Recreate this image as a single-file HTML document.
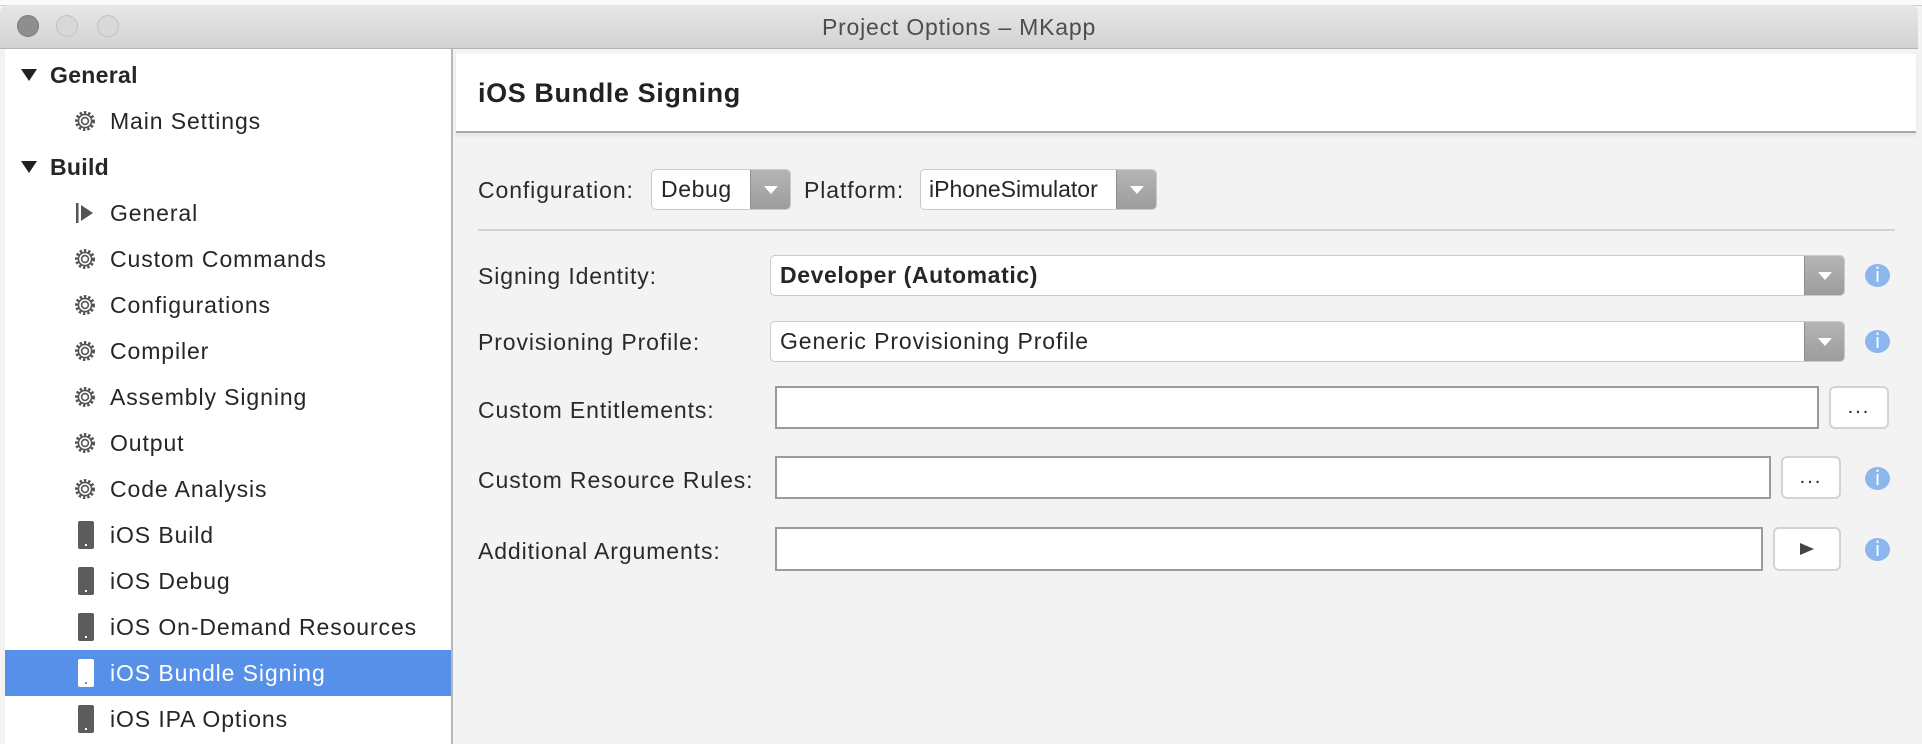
<!DOCTYPE html>
<html><head><meta charset="utf-8"><style>
*{box-sizing:border-box;margin:0;padding:0}
body{width:1922px;height:744px;overflow:hidden;background:#f3f3f3;font-family:"Liberation Sans",sans-serif;color:#262626;position:relative}
.abs{position:absolute}
#top{left:0;top:0;width:1922px;height:6px;background:#fafafa;border-bottom:1px solid #ccc}
#title{left:0;top:5px;width:1918px;height:44px;background:linear-gradient(#e8e7e8,#d3d2d3);border-bottom:1px solid #b5b5b5;border-radius:8px 8px 0 0;text-align:center;line-height:44px;font-size:23px;letter-spacing:0.8px;color:#4d4d4d}
.tl{width:22px;height:22px;border-radius:50%;top:15px;background:#d8d8d8;border:1px solid #c2c2c2}
#side{left:5px;top:49px;width:448px;height:695px;background:#fff;border-right:2px solid #b8b8b8}
.it{position:absolute;left:0;width:446px;height:46px;line-height:46px;font-size:23px;letter-spacing:0.9px}
.it .tx{position:absolute;left:105px}
.it.h .tx{left:45px;font-weight:bold;letter-spacing:0.3px}
.tri{position:absolute;left:16px;top:17px;width:0;height:0;border-left:8px solid transparent;border-right:8px solid transparent;border-top:12px solid #222}
.ic{position:absolute;left:68px;top:11px}
.ph{position:absolute;left:73px;top:9px;width:16px;height:28px;background:#5c5c5c;border-radius:2px}
.ph:after{content:"";position:absolute;left:7px;bottom:3px;width:2px;height:2px;background:#fff}
.sel{background:#5790e8;color:#fff}
.sel .ph{background:#fff}.sel .ph:after{background:#5790e8}
#hdr{left:456px;top:54px;width:1460px;height:79px;background:#fff;border-bottom:2px solid #a9a9a9;box-shadow:0 3px 4px rgba(0,0,0,.06)}
#hdr span{position:absolute;left:22px;top:24px;font-size:27px;font-weight:bold;color:#222;letter-spacing:0.6px}
.lbl{font-size:23px;color:#2a2a2a;letter-spacing:0.9px}
.combo{position:absolute;background:#fff;border:1px solid #c9c9c9;border-radius:5px;font-size:23px;letter-spacing:0.6px;padding-left:9px;overflow:hidden;white-space:nowrap}
.combo .dd{position:absolute;right:0;top:0;bottom:0;width:40px;background:linear-gradient(#b5b5b5,#9c9c9c);border-left:1px solid #8f8f8f}
.combo .dd:after{content:"";position:absolute;left:13px;top:50%;margin-top:-4px;border-left:7px solid transparent;border-right:7px solid transparent;border-top:8px solid #fff}
.inp{position:absolute;background:#fff;border:2px solid #9b9b9b}
.btn{position:absolute;background:#fff;border:2px solid #d3d3d3;border-radius:6px;text-align:center;font-size:20px;line-height:36px;letter-spacing:2px}
.info{position:absolute;left:1865px;width:25px;height:23px;border-radius:50%;background:#8cb6ec;color:#fff;text-align:center;font-size:20px;line-height:23px;font-family:"DejaVu Sans",sans-serif}
</style></head><body>
<div id="top" class="abs"></div>
<div id="title" class="abs">Project Options – MKapp</div>
<div class="abs tl" style="left:17px;background:#8e8e8e;border-color:#7b7b7b"></div>
<div class="abs tl" style="left:56px"></div>
<div class="abs tl" style="left:97px"></div>
<svg width="0" height="0" style="position:absolute"><defs><g id="gear"><circle cx="12" cy="12" r="8.5" fill="none" stroke="#555" stroke-width="3" stroke-dasharray="2.4 1.9"/><circle cx="12" cy="12" r="6.6" fill="none" stroke="#555" stroke-width="1.6"/><circle cx="12" cy="12" r="3.4" fill="none" stroke="#555" stroke-width="1.6"/></g></defs></svg>
<div id="side" class="abs">
<div class="it h" style="top:3px"><div class="tri"></div><span class="tx">General</span></div>
<div class="it" style="top:49px"><svg class="ic" width="24" height="24" viewBox="0 0 24 24"><use href="#gear"/></svg><span class="tx">Main Settings</span></div>
<div class="it h" style="top:95px"><div class="tri"></div><span class="tx">Build</span></div>
<div class="it" style="top:141px"><svg class="ic" width="24" height="24" viewBox="0 0 24 24"><rect x="3" y="2" width="2.5" height="20" fill="#555"/><path d="M8 4 L20 12 L8 20Z" fill="#555"/></svg><span class="tx">General</span></div>
<div class="it" style="top:187px"><svg class="ic" width="24" height="24" viewBox="0 0 24 24"><use href="#gear"/></svg><span class="tx">Custom Commands</span></div>
<div class="it" style="top:233px"><svg class="ic" width="24" height="24" viewBox="0 0 24 24"><use href="#gear"/></svg><span class="tx">Configurations</span></div>
<div class="it" style="top:279px"><svg class="ic" width="24" height="24" viewBox="0 0 24 24"><use href="#gear"/></svg><span class="tx">Compiler</span></div>
<div class="it" style="top:325px"><svg class="ic" width="24" height="24" viewBox="0 0 24 24"><use href="#gear"/></svg><span class="tx">Assembly Signing</span></div>
<div class="it" style="top:371px"><svg class="ic" width="24" height="24" viewBox="0 0 24 24"><use href="#gear"/></svg><span class="tx">Output</span></div>
<div class="it" style="top:417px"><svg class="ic" width="24" height="24" viewBox="0 0 24 24"><use href="#gear"/></svg><span class="tx">Code Analysis</span></div>
<div class="it" style="top:463px"><div class="ph"></div><span class="tx">iOS Build</span></div>
<div class="it" style="top:509px"><div class="ph"></div><span class="tx">iOS Debug</span></div>
<div class="it" style="top:555px"><div class="ph"></div><span class="tx">iOS On-Demand Resources</span></div>
<div class="it sel" style="top:601px"><div class="ph"></div><span class="tx">iOS Bundle Signing</span></div>
<div class="it" style="top:647px"><div class="ph"></div><span class="tx">iOS IPA Options</span></div>
</div>
<div id="hdr" class="abs"><span>iOS Bundle Signing</span></div>

<div class="abs lbl" style="left:478px;top:177px">Configuration:</div>
<div class="combo" style="left:651px;top:169px;width:140px;height:41px;line-height:39px">Debug<div class="dd"></div></div>
<div class="abs lbl" style="left:804px;top:177px">Platform:</div>
<div class="combo" style="left:920px;top:169px;width:237px;height:41px;line-height:39px;padding-left:8px;letter-spacing:0">iPhoneSimulator<div class="dd"></div></div>
<div class="abs" style="left:478px;top:229px;width:1417px;height:2px;background:#d3d3d3"></div>

<div class="abs lbl" style="left:478px;top:263px">Signing Identity:</div>
<div class="combo" style="left:770px;top:255px;width:1075px;height:41px;line-height:39px;font-weight:bold">Developer (Automatic)<div class="dd"></div></div>
<div class="info" style="top:264px">i</div>

<div class="abs lbl" style="left:478px;top:329px">Provisioning Profile:</div>
<div class="combo" style="left:770px;top:321px;width:1075px;height:41px;line-height:39px;letter-spacing:0.9px">Generic Provisioning Profile<div class="dd"></div></div>
<div class="info" style="top:330px">i</div>

<div class="abs lbl" style="left:478px;top:397px">Custom Entitlements:</div>
<div class="inp" style="left:775px;top:386px;width:1044px;height:43px"></div>
<div class="btn" style="left:1829px;top:386px;width:60px;height:43px;line-height:38px">...</div>

<div class="abs lbl" style="left:478px;top:467px">Custom Resource Rules:</div>
<div class="inp" style="left:775px;top:456px;width:996px;height:43px"></div>
<div class="btn" style="left:1781px;top:456px;width:60px;height:43px;line-height:38px">...</div>
<div class="info" style="top:467px">i</div>

<div class="abs lbl" style="left:478px;top:538px">Additional Arguments:</div>
<div class="inp" style="left:775px;top:527px;width:988px;height:44px"></div>
<div class="btn" style="left:1773px;top:527px;width:68px;height:44px"><svg width="14" height="12" viewBox="0 0 14 12" style="margin-top:14px"><path d="M0 0 L14 6 L0 12Z" fill="#444"/></svg></div>
<div class="info" style="top:538px">i</div>
</body></html>
